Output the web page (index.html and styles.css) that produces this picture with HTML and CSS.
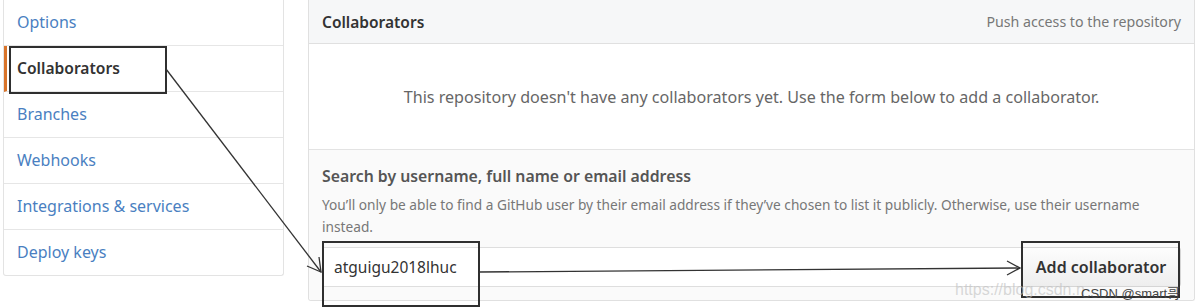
FILE: index.html
```html
<!DOCTYPE html>
<html lang="en">
<head>
    <meta charset="UTF-8">
    <meta name="viewport" content="width=device-width, initial-scale=1.0">
    <title>Collaborators</title>
    <link rel="stylesheet" href="styles.css">
</head>
<body>
    <div class="page">
        <nav class="menu">
            <a class="menu-item">Options</a>
            <a class="menu-item selected">Collaborators</a>
            <a class="menu-item">Branches</a>
            <a class="menu-item">Webhooks</a>
            <a class="menu-item">Integrations &amp; services</a>
            <a class="menu-item">Deploy keys</a>
        </nav>

        <div class="panel">
            <div class="panel-head">
                <span class="panel-title">Collaborators</span>
                <span class="panel-note">Push access to the repository</span>
            </div>
            <div class="panel-blank">
                This repository doesn't have any collaborators yet. Use the form below to add a collaborator.
            </div>
            <div class="panel-form">
                <h3 class="form-title">Search by username, full name or email address</h3>
                <p class="form-note">You’ll only be able to find a GitHub user by their email address if they’ve chosen to list it publicly. Otherwise, use their username instead.</p>
                <div class="input-group">
                    <input class="user-input" type="text" value="atguigu2018lhuc">
                    <button class="add-btn">Add collaborator</button>
                </div>
            </div>
        </div>
    </div>

    <!-- hand drawn notes on top of the screenshot -->
    <div class="mark mark-menu"></div>
    <div class="mark mark-input"></div>
    <div class="mark mark-btn"></div>
    <svg class="arrows" width="1196" height="307" viewBox="0 0 1196 307">
        <g stroke="#333" stroke-width="1.3" fill="none">
            <line x1="166" y1="69" x2="321" y2="272"/>
            <polyline points="307,266 321,272 319,257"/>
            <line x1="479" y1="272" x2="1020" y2="268"/>
            <polyline points="1007,261 1020,268 1007,275"/>
        </g>
    </svg>

    <div class="watermark">
        <span class="wm-url">https://blog.csdn.n</span>
        <span class="wm-name">CSDN @smart哥</span>
    </div>
</body>
</html>
```

FILE: styles.css
```css
body{
    margin: 0;
    background-color: white;
    font-family: "Noto Sans", "Open Sans", sans-serif;
    color: #333;
}
.page{
    display: flex;
    align-items: flex-start;
    gap: 24px;
    padding-left: 3px;
}

/* left menu */
.menu{
    width: 279px;
    display: flex;
    flex-direction: column;
    border: 1px solid #e3e3e3;
    border-top: none;
    border-radius: 0 0 3px 3px;
}
.menu-item{
    height: 45px;
    line-height: 45px;
    padding-left: 13px;
    font-size: 16px;
    color: #4a7fc1;
    border-bottom: 1px solid #e6e6e6;
}
.menu-item:last-child{
    border-bottom: none;
}
.selected{
    border-left: 3px solid #d9742a;
    padding-left: 10px;
    color: #333;
    font-weight: 600;
    font-size: 15.6px;
}

/* right panel */
.panel{
    width: 885px;
    border: 1px solid #e0e0e0;
    border-top: none;
    border-radius: 0 0 3px 3px;
}
.panel-head{
    height: 43px;
    display: flex;
    align-items: center;
    justify-content: space-between;
    padding: 0 13px 0 13px;
    background-color: #f6f7f8;
    border-bottom: 1px solid #e0e0e0;
}
.panel-title{
    font-size: 15.5px;
    font-weight: 600;
    color: #333;
}
.panel-note{
    font-size: 14.2px;
    color: #777;
}
.panel-blank{
    height: 105px;
    display: flex;
    align-items: center;
    justify-content: center;
    font-size: 16.1px;
    color: #666;
    border-bottom: 1px solid #e3e3e3;
}
.panel-form{
    background-color: #fafafa;
    padding: 16px 13px 13px 13px;
    border-radius: 0 0 3px 3px;
}
.form-title{
    margin: 0;
    font-size: 15.8px;
    line-height: 20px;
    font-weight: 600;
    color: #555;
}
.form-note{
    margin: 8px 0 0 0;
    max-width: 840px;
    font-size: 13.7px;
    line-height: 22px;
    color: #777;
}
.input-group{
    display: flex;
    margin-top: 9px;
}
.user-input{
    width: 700px;
    height: 40px;
    box-sizing: border-box;
    padding: 0 11px;
    border: 1px solid #dedede;
    border-right: none;
    background-color: white;
    font-family: "Noto Sans", sans-serif;
    font-size: 15.5px;
    color: #333;
}
.add-btn{
    width: 160px;
    height: 40px;
    border: 1px solid #d5d5d5;
    border-radius: 0 3px 3px 0;
    background: linear-gradient(#fdfdfd, #eeeeee);
    font-family: "Noto Sans", sans-serif;
    font-size: 16px;
    font-weight: 600;
    color: #333;
}

/* annotations */
.mark{
    position: absolute;
    border: 2px solid #2f2f2f;
    box-sizing: border-box;
}
.mark-menu{
    left: 9px;
    top: 46px;
    width: 158px;
    height: 48px;
}
.mark-input{
    left: 322px;
    top: 241px;
    width: 158px;
    height: 66px;
}
.mark-btn{
    left: 1021px;
    top: 241px;
    width: 159px;
    height: 57px;
}
.arrows{
    position: absolute;
    left: 0;
    top: 0;
}
.watermark{
    position: absolute;
    left: 955px;
    top: 281px;
    font-family: "Liberation Sans", "Noto Sans CJK SC", sans-serif;
    white-space: nowrap;
}
.wm-url{
    color: rgba(190, 190, 190, 0.6);
    font-size: 16px;
}
.wm-name{
    position: absolute;
    left: 126px;
    top: 2px;
    color: #444;
    font-size: 13px;
}
```
